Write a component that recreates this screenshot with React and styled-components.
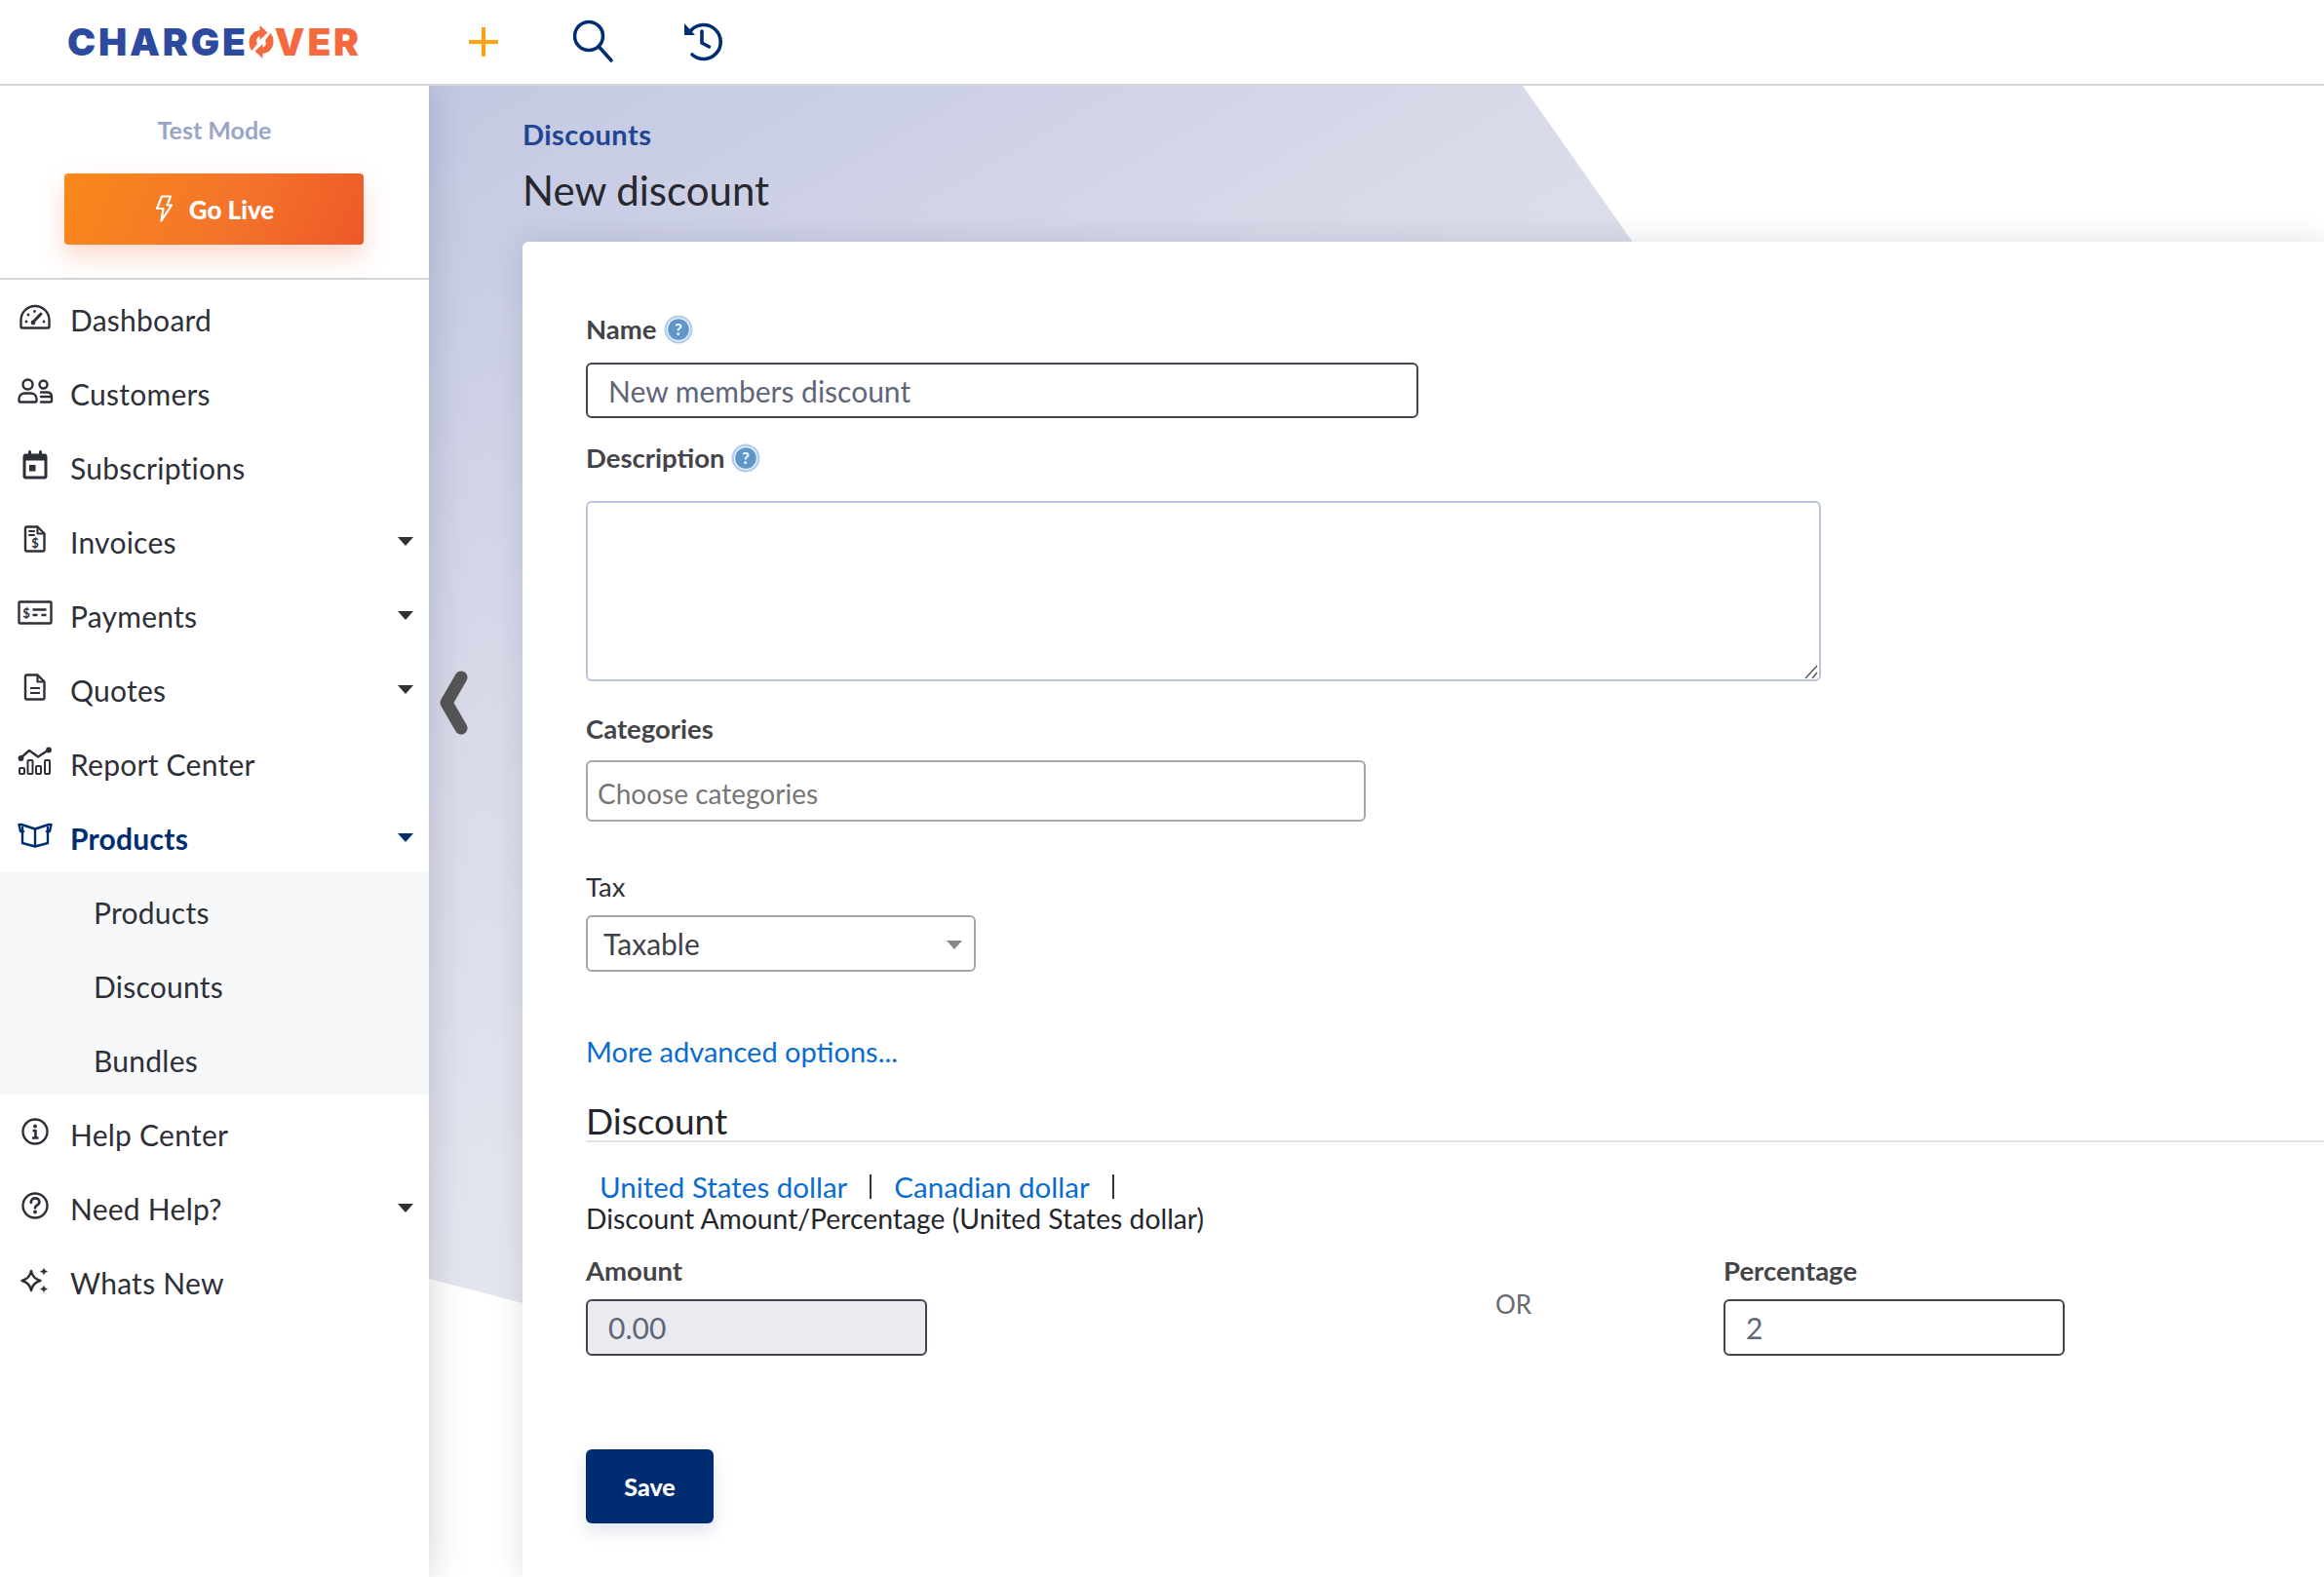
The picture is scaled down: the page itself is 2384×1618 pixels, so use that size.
import React from "react";
import styled, { createGlobalStyle } from "styled-components";

const FONT = `"Lato", "Open Sans", "Liberation Sans", sans-serif`;
const NAVY = "#002d72";

const Global = createGlobalStyle`
  html, body { margin: 0; padding: 0; background: #fff; }
  body { font-family: ${FONT}; color: #2e3038; }
  * { box-sizing: border-box; }
`;

const Page = styled.div`
  width: 100%;
  height: 1618px;
  overflow: hidden;
  display: flex;
  flex-direction: column;
`;

const TopBar = styled.header`
  height: 88px;
  flex: none;
  display: flex;
  align-items: center;
  border-bottom: 2px solid #d4d4d4;
  background: #fff;
  position: relative;
  z-index: 3;
  padding-left: 69px;
`;

const Logo = styled.div`
  width: 412px;
  display: flex;
  align-items: center;
  font-family: "Inter", ${FONT};
  font-weight: 900;
  font-size: 39px;
  line-height: 44px;
  letter-spacing: 2.8px;
  color: #2d4a9e;
`;
const LogoEnd = styled.span`
  color: #f46a3e;
`;
const LogoMark = styled.svg`
  width: 28px;
  height: 34px;
  margin: 0 0 0 -1px;
  flex: none;
`;

const TopIcon = styled.svg`
  flex: none;
  width: ${(p) => p.$w}px;
  height: 48px;
  margin-right: ${(p) => p.$gap}px;
  fill: none;
  stroke: ${(p) => p.$color || NAVY};
  stroke-width: ${(p) => p.$stroke || 4}px;
`;

const Body = styled.div`
  flex: 1;
  display: flex;
  min-height: 0;
`;

const Sidebar = styled.aside`
  flex: none;
  width: 440px;
  background: #fff;
  position: relative;
  z-index: 2;
  box-shadow: 0 0 36px rgba(30, 35, 70, 0.2);
`;

const ModeBox = styled.div`
  height: 199px;
  border-bottom: 2px solid #d4d4d4;
  padding-top: 29px;
  display: flex;
  flex-direction: column;
  align-items: center;
`;
const ModeText = styled.div`
  font-size: 25px;
  line-height: 32px;
  color: #9aa6c8;
  font-weight: 700;
`;
const GoLive = styled.button`
  margin: 29px 2px 0 0;
  width: 307px;
  height: 73px;
  border: 0;
  border-radius: 4px;
  background: linear-gradient(115deg, #f8891a 0%, #f4742a 55%, #ee5828 100%);
  box-shadow: 0 12px 26px rgba(240, 90, 40, 0.24);
  color: #fff;
  font-family: ${FONT};
  font-weight: 900;
  font-size: 26px;
  display: flex;
  align-items: center;
  justify-content: center;
  gap: 15px;
`;
const Bolt = styled.svg`
  width: 22px;
  height: 28px;
  margin-top: -2px;
  fill: none;
  stroke: #fff;
  stroke-width: 2.2px;
  stroke-linejoin: round;
`;

const NavRow = styled.div`
  height: 76px;
  display: flex;
  align-items: center;
  padding: 0 16px 0 18px;
  color: ${(p) => (p.$active ? NAVY : "#2e3038")};
`;
const IconSlot = styled.span`
  width: 36px;
  height: 36px;
  flex: none;
  display: flex;
  align-items: center;
  justify-content: center;
  margin-right: 18px;
  svg {
    display: block;
    fill: none;
    stroke: currentColor;
    stroke-width: 2.4px;
    stroke-linecap: round;
    stroke-linejoin: round;
    overflow: visible;
  }
`;
const NavLabel = styled.span`
  flex: 1;
  margin-top: 6px;
  font-size: 30px;
  line-height: 36px;
  letter-spacing: 0.25px;
  font-weight: ${(p) => (p.$active ? 700 : 400)};
`;
const Caret = styled.span`
  width: 0;
  height: 0;
  margin-top: 5px;
  border-left: 8px solid transparent;
  border-right: 8px solid transparent;
  border-top: 9px solid currentColor;
`;
const SubMenu = styled.div`
  background: #f7f8fa;
`;
const SubRow = styled.div`
  height: 76px;
  display: flex;
  align-items: center;
  padding: 5px 0 0 96px;
  font-size: 30px;
  letter-spacing: 0.25px;
  color: #2e3038;
`;

const Main = styled.main`
  flex: 1;
  min-width: 0;
  position: relative;
  background: #fff;
  &::before {
    content: "";
    position: absolute;
    inset: 0;
    background: linear-gradient(150deg, #c3c8e2 0%, #d8dae9 25%, #e4e6ef 48%, #e8e9f1 100%);
    clip-path: polygon(0 0, 1122px 0, 1236px 162px, 1500px 1300px, 96px 1249px, 0 1224px);
  }
`;
const MainInner = styled.div`
  position: relative;
  height: 100%;
  padding: 32px 0 0 96px;
  display: flex;
  flex-direction: column;
`;
const Crumb = styled.div`
  font-size: 29px;
  line-height: 36px;
  letter-spacing: 0.45px;
  font-weight: 700;
  color: #1f4595;
`;
const Title = styled.h1`
  margin: 12px 0 0;
  font-size: 42px;
  line-height: 54px;
  font-weight: 400;
  color: #26282d;
`;
const Card = styled.section`
  margin-top: 26px;
  flex: 1;
  background: #fff;
  border-top-left-radius: 6px;
  box-shadow: 0 0 30px rgba(30, 35, 70, 0.14);
  padding: 73px 0 0 65px;
`;

const Label = styled.div`
  display: flex;
  align-items: center;
  gap: 7px;
  margin-top: ${(p) => p.$top || 0}px;
  font-size: 27.5px;
  line-height: 34px;
  font-weight: ${(p) => (p.$plain ? 400 : 700)};
  color: ${(p) => (p.$plain ? "#2e3038" : "#434448")};
`;
const HelpDot = styled.svg`
  width: 30px;
  height: 30px;
  flex: none;
`;

const TextBox = styled.input`
  display: block;
  width: ${(p) => p.$w}px;
  height: ${(p) => p.$h || 57}px;
  margin-top: ${(p) => p.$top}px;
  padding: ${(p) => p.$nudge || 0}px ${(p) => p.$pad || 21}px 0;
  border: 2px solid ${(p) => p.$line || "#44444f"};
  border-radius: 6px;
  background: ${(p) => p.$fill || "#fff"};
  color: #5f6579;
  font-family: ${FONT};
  font-size: ${(p) => p.$size || 30}px;
  outline: none;
  &::placeholder {
    color: #767676;
    opacity: 1;
  }
`;
const AreaWrap = styled.div`
  position: relative;
  width: 1267px;
  height: 185px;
  margin-top: 27px;
`;
const Area = styled.textarea`
  display: block;
  width: 100%;
  height: 100%;
  resize: none;
  border: 2px solid #b9c4dc;
  border-radius: 6px;
  background: #fff;
  outline: none;
`;
const Grip = styled.svg`
  position: absolute;
  right: 3px;
  bottom: 3px;
  width: 14px;
  height: 14px;
  stroke: #5a5a5a;
  stroke-width: 1.5px;
`;
const SelectWrap = styled.div`
  position: relative;
  width: 400px;
  height: 58px;
  margin-top: 12px;
  &::after {
    content: "";
    position: absolute;
    right: 14px;
    top: 26px;
    border-left: 8px solid transparent;
    border-right: 8px solid transparent;
    border-top: 9px solid #888;
  }
`;
const Select = styled.select`
  appearance: none;
  width: 100%;
  height: 100%;
  padding: 0 16px;
  border: 2px solid #a6a6a6;
  border-radius: 6px;
  background: #fff;
  font-family: ${FONT};
  font-size: 30px;
  color: #3f4148;
  outline: none;
`;
const MoreLink = styled.a`
  display: block;
  margin-top: 64px;
  font-size: 29px;
  line-height: 36px;
  color: #0a6cd0;
`;
const SectionTitle = styled.h2`
  margin: 25px 0 0;
  height: 50px;
  border-bottom: 2px solid #dee2e6;
  padding-top: 3px;
  font-size: 37px;
  line-height: 50px;
  font-weight: 400;
  color: #24262b;
`;
const CurrencyRow = styled.div`
  margin-top: 27px;
  padding-left: 14px;
  display: flex;
  align-items: center;
  height: 36px;
  font-size: 29.5px;
`;
const CurrencyLink = styled.a`
  color: #0a6cd0;
`;
const Sep = styled.span`
  width: 2px;
  height: 25px;
  margin: 0 23px;
  background: #33353b;
`;
const SubNote = styled.div`
  margin-top: 1px;
  font-size: 28.3px;
  line-height: 28px;
  color: #24262b;
`;
const AmountGrid = styled.div`
  margin-top: 23px;
  display: grid;
  grid-template-columns: 933px 234px 350px;
`;
const OrText = styled.div`
  margin-top: 34px;
  font-size: 26px;
  line-height: 34px;
  color: #666a70;
`;
const SaveButton = styled.button`
  display: block;
  margin-top: 96px;
  width: 131px;
  height: 76px;
  border: 0;
  border-radius: 6px;
  background: ${NAVY};
  box-shadow: 0 8px 18px rgba(0, 45, 114, 0.12);
  color: #fff;
  font-family: ${FONT};
  font-weight: 900;
  font-size: 25px;
`;
const Collapse = styled.svg`
  position: absolute;
  left: 10px;
  top: 600px;
  width: 30px;
  height: 66px;
  fill: none;
  stroke: #555;
  stroke-width: 13px;
  stroke-linecap: round;
  stroke-linejoin: round;
`;

const Help = () => (
  <HelpDot viewBox="0 0 30 30">
    <circle cx="15" cy="15" r="14.5" fill="#b4cee9" />
    <circle cx="15" cy="15" r="11.5" fill="#5f95c9" stroke="#e6f0fa" strokeWidth="1.4" />
    <text x="15" y="21" textAnchor="middle" fontSize="17" fontWeight="900" fontFamily="Lato, sans-serif" fill="#eaf2fb">?</text>
  </HelpDot>
);

const Gauge = () => (
  <svg width="32" height="26" viewBox="0 0 32 26">
    <path d="M3 24.5h26a1.5 1.5 0 0 0 1.5-1.5v-6.5A14.5 14.5 0 0 0 1.5 16.5V23A1.5 1.5 0 0 0 3 24.5Z" />
    <path d="M14 18.5 22 10" strokeWidth="3" />
    <circle cx="14" cy="19" r="2.4" fill="currentColor" stroke="none" />
    <circle cx="7" cy="18" r="1.4" fill="currentColor" stroke="none" />
    <circle cx="9" cy="11" r="1.4" fill="currentColor" stroke="none" />
    <circle cx="15.5" cy="7.5" r="1.4" fill="currentColor" stroke="none" />
    <circle cx="25" cy="18" r="1.4" fill="currentColor" stroke="none" />
  </svg>
);
const People = () => (
  <svg width="36" height="26" viewBox="0 0 36 26">
    <circle cx="10.5" cy="6.5" r="5" />
    <circle cx="26.5" cy="6.5" r="4" />
    <path d="M3 24.5a1.5 1.5 0 0 1-1.5-1.5v-1.5c0-4 3-6 6-6h6c3 0 6 2 6 6V23a1.5 1.5 0 0 1-1.5 1.5Z" />
    <path d="M24 14.5h6c3 0 5 1.5 5 4.5M24 24.5h9.5A1.5 1.5 0 0 0 35 23V19M24 19h11" />
  </svg>
);
const Calendar = () => (
  <svg width="26" height="30" viewBox="0 0 26 30">
    <rect x="2" y="5" width="22" height="23" rx="1.5" strokeWidth="3" />
    <path d="M2 8h22" strokeWidth="5" strokeLinecap="butt" />
    <path d="M7.5 1.5V5M18.5 1.5V5" strokeWidth="3" />
    <rect x="7" y="15" width="6.5" height="6.5" fill="currentColor" stroke="none" />
  </svg>
);
const DollarDoc = () => (
  <svg width="22" height="28" viewBox="0 0 22 28">
    <path d="M2.5 1.5h11l7 7V25a1.500 1.500 0 0 1-1.500 1.500H2.500A1.500 1.500 0 0 1 1 25V3a1.500 1.500 0 0 1 1.500-1.500Z" />
    <path d="M13.5 1.5v7h7M5 6h5M5 10h5" strokeWidth="2" />
    <text x="11" y="23" textAnchor="middle" fontSize="13" fontWeight="700" fontFamily="Lato, sans-serif" fill="currentColor" stroke="none">$</text>
  </svg>
);
const Check = () => (
  <svg width="36" height="26" viewBox="0 0 36 26">
    <rect x="1.5" y="1.5" width="33" height="22" rx="1" />
    <text x="9" y="17.5" textAnchor="middle" fontSize="13" fontWeight="700" fontFamily="Lato, sans-serif" fill="currentColor" stroke="none">$</text>
    <path d="M15.5 9.5h14M15.5 15h5M24.5 15h5" strokeWidth="2.4" strokeLinecap="butt" />
  </svg>
);
const LinesDoc = () => (
  <svg width="22" height="28" viewBox="0 0 22 28">
    <path d="M2.5 1.5h11l7 7V25a1.5 1.5 0 0 1-1.5 1.5H2.5A1.5 1.5 0 0 1 1 25V3a1.5 1.5 0 0 1 1.5-1.5Z" />
    <path d="M13.5 1.5v7h7M6 15h10M6 20h10" strokeWidth="2.2" strokeLinecap="butt" />
  </svg>
);
const Report = () => (
  <svg width="34" height="28" viewBox="0 0 34 28">
    <path d="M2.5 10.5 11 3l9 6.5L31.5 2" strokeWidth="2.4" />
    <circle cx="2.5" cy="11" r="1.7" fill="currentColor" />
    <circle cx="31" cy="2.5" r="1.7" fill="currentColor" />
    <rect x="1" y="21" width="5" height="6" rx="1" strokeWidth="2" />
    <rect x="9.5" y="13" width="5" height="14" rx="1" strokeWidth="2" />
    <rect x="18" y="19" width="5" height="8" rx="1" strokeWidth="2" />
    <rect x="27" y="13" width="5" height="14" rx="1" strokeWidth="2" />
  </svg>
);
const Box = () => (
  <svg width="36" height="26" viewBox="0 0 36 26" strokeWidth="2.8">
    <path d="M18 6.5 4 2H1.5L3 9h3M18 6.5 32 2h2.5L33 9h-3" />
    <path d="M5 5v16l13 3.500L31 21V5M18 6.500v18" />
  </svg>
);
const Info = () => (
  <svg width="28" height="28" viewBox="0 0 28 28">
    <circle cx="14" cy="14" r="12.5" />
    <circle cx="14" cy="8.5" r="1.9" fill="currentColor" stroke="none" />
    <path d="M11.5 13H14.5V20M11 20.5h6.5" strokeWidth="2.6" strokeLinecap="butt" />
  </svg>
);
const Question = () => (
  <svg width="28" height="28" viewBox="0 0 28 28">
    <circle cx="14" cy="14" r="12.5" />
    <path d="M9.800 10.800c0-6 8.600-5.500 8.600-.5 0 3.200-4.400 3-4.400 6" strokeWidth="2.8" />
    <circle cx="14" cy="20.5" r="1.9" fill="currentColor" stroke="none" />
  </svg>
);
const Sparkle = () => (
  <svg width="28" height="29" viewBox="0 0 28 29">
    <path d="M10 5C11 10 14 13.5 19.5 15 14 16.5 11 20 10 25 9 20 6 16.5 .5 15 6 13.5 9 10 10 5Z" />
    <path d="M23 1c.5 2.800 1.300 3.600 4.500 4.500-3.200.9-4 1.700-4.500 4.500-.5-2.800-1.300-3.600-4.500-4.500C21.700 4.600 22.500 3.800 23 1ZM23 19c.5 2.800 1.300 3.600 4.500 4.500-3.200.9-4 1.700-4.500 4.500-.5-2.800-1.300-3.600-4.500-4.500 3.200-.9 4-1.700 4.500-4.500Z" fill="currentColor" stroke="none" />
  </svg>
);

const Item = ({ icon, label, caret, active }) => (
  <NavRow $active={active}>
    <IconSlot>{icon}</IconSlot>
    <NavLabel $active={active}>{label}</NavLabel>
    {caret && <Caret />}
  </NavRow>
);

export default function App() {
  return (
    <Page>
      <Global />
      <TopBar>
        <Logo>
          CHARGE
          <LogoMark viewBox="0 0 27 34">
            <path d="M13 5C6 5 1 10.500 1 17.500 1 21 2 24 4 26L9.500 18.500C7.500 15 9.500 11 13 11Z" fill="#f46a3e" />
            <path d="M12 0l8 7.500-8 7.500Z" fill="#f46a3e" />
            <path d="M14 29C21 29 26 23.500 26 16.500 26 13 25 10 23 8L17.500 15.500C19.500 19 17.500 23 14 23Z" fill="#f46a3e" />
            <path d="M15 34l-8-7.500 8-7.500Z" fill="#f46a3e" />
          </LogoMark>
          <LogoEnd>VER</LogoEnd>
        </Logo>
        <TopIcon $w={30} $gap={77} $color="#fca311" viewBox="0 0 30 48">
          <path d="M15 9v30M0 24h30" />
        </TopIcon>
        <TopIcon $w={42} $gap={71} $stroke={3.6} viewBox="0 0 42 48">
          <circle cx="16" cy="18" r="14.500" />
          <path d="M26.500 29 39 43" strokeLinecap="round" />
        </TopIcon>
        <TopIcon $w={42} $gap={0} $stroke={3.6} viewBox="0 0 42 48">
          <path d="M8 12A17.500 17.500 0 1 1 9 37" strokeLinecap="round" />
          <path d="M1 5v12h11Z" fill={NAVY} stroke="none" />
          <path d="M19 13v12l7.500 4" strokeLinecap="round" />
        </TopIcon>
      </TopBar>
      <Body>
        <Sidebar>
          <ModeBox>
            <ModeText>Test Mode</ModeText>
            <GoLive>
              <Bolt viewBox="0 0 22 28">
                <path d="M9 1.5h9l-3.500 9H19L8.500 26.500 10.500 14H4Z" />
              </Bolt>
              Go Live
            </GoLive>
          </ModeBox>
          <nav>
            <Item icon={<Gauge />} label="Dashboard" />
            <Item icon={<People />} label="Customers" />
            <Item icon={<Calendar />} label="Subscriptions" />
            <Item icon={<DollarDoc />} label="Invoices" caret />
            <Item icon={<Check />} label="Payments" caret />
            <Item icon={<LinesDoc />} label="Quotes" caret />
            <Item icon={<Report />} label="Report Center" />
            <Item icon={<Box />} label="Products" caret active />
            <SubMenu>
              <SubRow>Products</SubRow>
              <SubRow>Discounts</SubRow>
              <SubRow>Bundles</SubRow>
            </SubMenu>
            <Item icon={<Info />} label="Help Center" />
            <Item icon={<Question />} label="Need Help?" caret />
            <Item icon={<Sparkle />} label="Whats New" />
          </nav>
        </Sidebar>
        <Main>
          <MainInner>
            <Crumb>Discounts</Crumb>
            <Title>New discount</Title>
            <Card>
              <Label>
                Name <Help />
              </Label>
              <TextBox $w={854} $top={17} defaultValue="New members discount" />
              <Label $top={24}>
                Description <Help />
              </Label>
              <AreaWrap>
                <Area />
                <Grip viewBox="0 0 14 14">
                  <path d="M1 14 13 1M8 14l5-6" />
                </Grip>
              </AreaWrap>
              <Label $top={32}>Categories</Label>
              <TextBox $w={800} $h={63} $top={15} $pad={10} $nudge={5} $line="#a6a6a6" $size={28} placeholder="Choose categories" />
              <Label $top={50} $plain>
                Tax
              </Label>
              <SelectWrap>
                <Select defaultValue="Taxable">
                  <option>Taxable</option>
                </Select>
              </SelectWrap>
              <MoreLink>More advanced options...</MoreLink>
              <SectionTitle>Discount</SectionTitle>
              <CurrencyRow>
                <CurrencyLink>United States dollar</CurrencyLink>
                <Sep />
                <CurrencyLink>Canadian dollar</CurrencyLink>
                <Sep />
              </CurrencyRow>
              <SubNote>Discount Amount/Percentage (United States dollar)</SubNote>
              <AmountGrid>
                <div>
                  <Label>Amount</Label>
                  <TextBox $w={350} $h={58} $top={12} $fill="#e9ebef" defaultValue="0.00" />
                </div>
                <OrText>OR</OrText>
                <div>
                  <Label>Percentage</Label>
                  <TextBox $w={350} $h={58} $top={12} defaultValue="2" />
                </div>
              </AmountGrid>
              <SaveButton>Save</SaveButton>
            </Card>
          </MainInner>
          <Collapse viewBox="0 0 30 66">
            <path d="M23 7 8 33l15 26" />
          </Collapse>
        </Main>
      </Body>
    </Page>
  );
}
